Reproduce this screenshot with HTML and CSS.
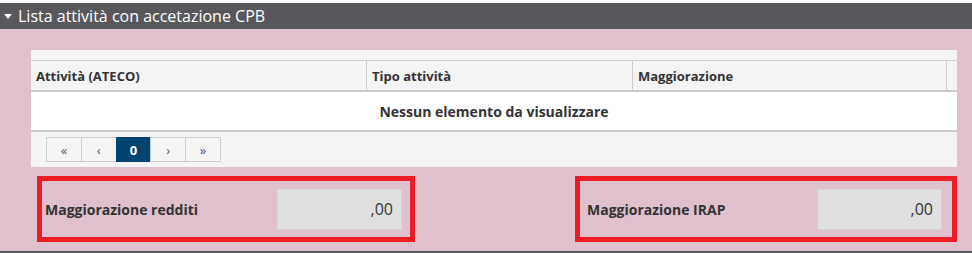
FILE: index.html
```html
<!DOCTYPE html>
<html lang="it">
<head>
  <meta charset="UTF-8">
  <title>Lista attività con accetazione CPB</title>
  <link rel="stylesheet" href="styles.css">
</head>
<body>

  <div class="section">
    <div class="section-header">
      <span class="caret"></span>
      <span>Lista attività con accetazione CPB</span>
    </div>

    <div class="section-body">
      <div class="grid-box">
        <div class="grid-top"></div>
        <div class="grid-head">
          <div class="col col-ateco">Attività (ATECO)</div>
          <div class="col col-tipo">Tipo attività</div>
          <div class="col col-magg">Maggiorazione</div>
          <div class="col col-scroll"></div>
        </div>
        <div class="grid-empty">Nessun elemento da visualizzare</div>
        <div class="grid-pager">
          <div class="pager">
            <button class="page-btn">&laquo;</button>
            <button class="page-btn">&lsaquo;</button>
            <button class="page-btn active">0</button>
            <button class="page-btn">&rsaquo;</button>
            <button class="page-btn">&raquo;</button>
          </div>
        </div>
      </div>

      <div class="fields">
        <div class="field field-left">
          <label class="field-label">Maggiorazione redditi</label>
          <div class="field-input">,00</div>
        </div>
        <div class="field field-right">
          <label class="field-label">Maggiorazione IRAP</label>
          <div class="field-input">,00</div>
        </div>
      </div>
    </div>
  </div>

</body>
</html>
```

FILE: styles.css
```css
/* Page */
body {
  margin: 0;
  padding-top: 3px;
  background-color: #fff;
  font-family: "Open Sans", Arial, sans-serif;
  color: #333;
}

.section {
  background-color: #dfc0cd;
  border-bottom: 3px solid #58575c;
}

.section-header {
  display: flex;
  align-items: center;
  height: 26px;
  padding-left: 4px;
  background-color: #58575c;
  color: #fff;
  font-size: 16px;
}

.caret {
  width: 0;
  height: 0;
  margin-right: 6px;
  border-left: 4px solid transparent;
  border-right: 4px solid transparent;
  border-top: 5px solid #fff;
}

.section-body {
  padding: 21px 15px 9px 31px;
}

/* Grid */
.grid-box {
  background-color: #f4f4f4;
}

.grid-top {
  height: 10px;
}

.grid-head {
  display: flex;
  height: 29px;
  border-top: 1px solid #ccc;
  border-bottom: 2px solid #ccc;
  font-size: 13px;
  font-weight: bold;
}

.col {
  display: flex;
  align-items: center;
  padding-left: 5px;
  border-right: 1px solid #ccc;
}

.col-ateco { width: 330px; }
.col-tipo { width: 260px; }
.col-magg { width: 308px; }
.col-scroll { flex: 1; border-right: none; padding: 0; }

.grid-empty {
  display: flex;
  align-items: center;
  justify-content: center;
  height: 38px;
  background-color: #fff;
  border-bottom: 2px solid #ccc;
  font-size: 14px;
  font-weight: bold;
}

.grid-pager {
  height: 35px;
  padding-left: 15px;
  display: flex;
  align-items: center;
}

.pager {
  display: flex;
}

.page-btn {
  width: 35.8px;
  height: 25px;
  margin-left: -1px;
  padding: 0;
  border: 1px solid #ccc;
  background-color: #f4f4f4;
  color: #3d5a80;
  font-family: "Open Sans", Arial, sans-serif;
  font-size: 13px;
}

.page-btn:first-child {
  margin-left: 0;
}

.page-btn.active {
  background-color: #00456f;
  border-color: #00456f;
  color: #fff;
  font-weight: bold;
}

/* Fields */
.fields {
  display: flex;
  justify-content: space-between;
  margin-top: 9px;
  padding-left: 6px;
}

.field {
  box-sizing: border-box;
  display: flex;
  align-items: center;
  justify-content: space-between;
  height: 66px;
  border: 5px solid #ed1c24;
}

.field-left {
  width: 378px;
  padding: 0 8px 0 3px;
}

.field-right {
  width: 382px;
  padding: 0 10px 0 7px;
}

.field-label {
  font-size: 14px;
  font-weight: bold;
  color: #333;
}

.field-input {
  box-sizing: border-box;
  width: 125px;
  height: 41px;
  line-height: 39px;
  padding-right: 8px;
  border: 1px solid #d4d4d4;
  background-color: #e0e0e0;
  text-align: right;
  font-size: 16px;
}
```
